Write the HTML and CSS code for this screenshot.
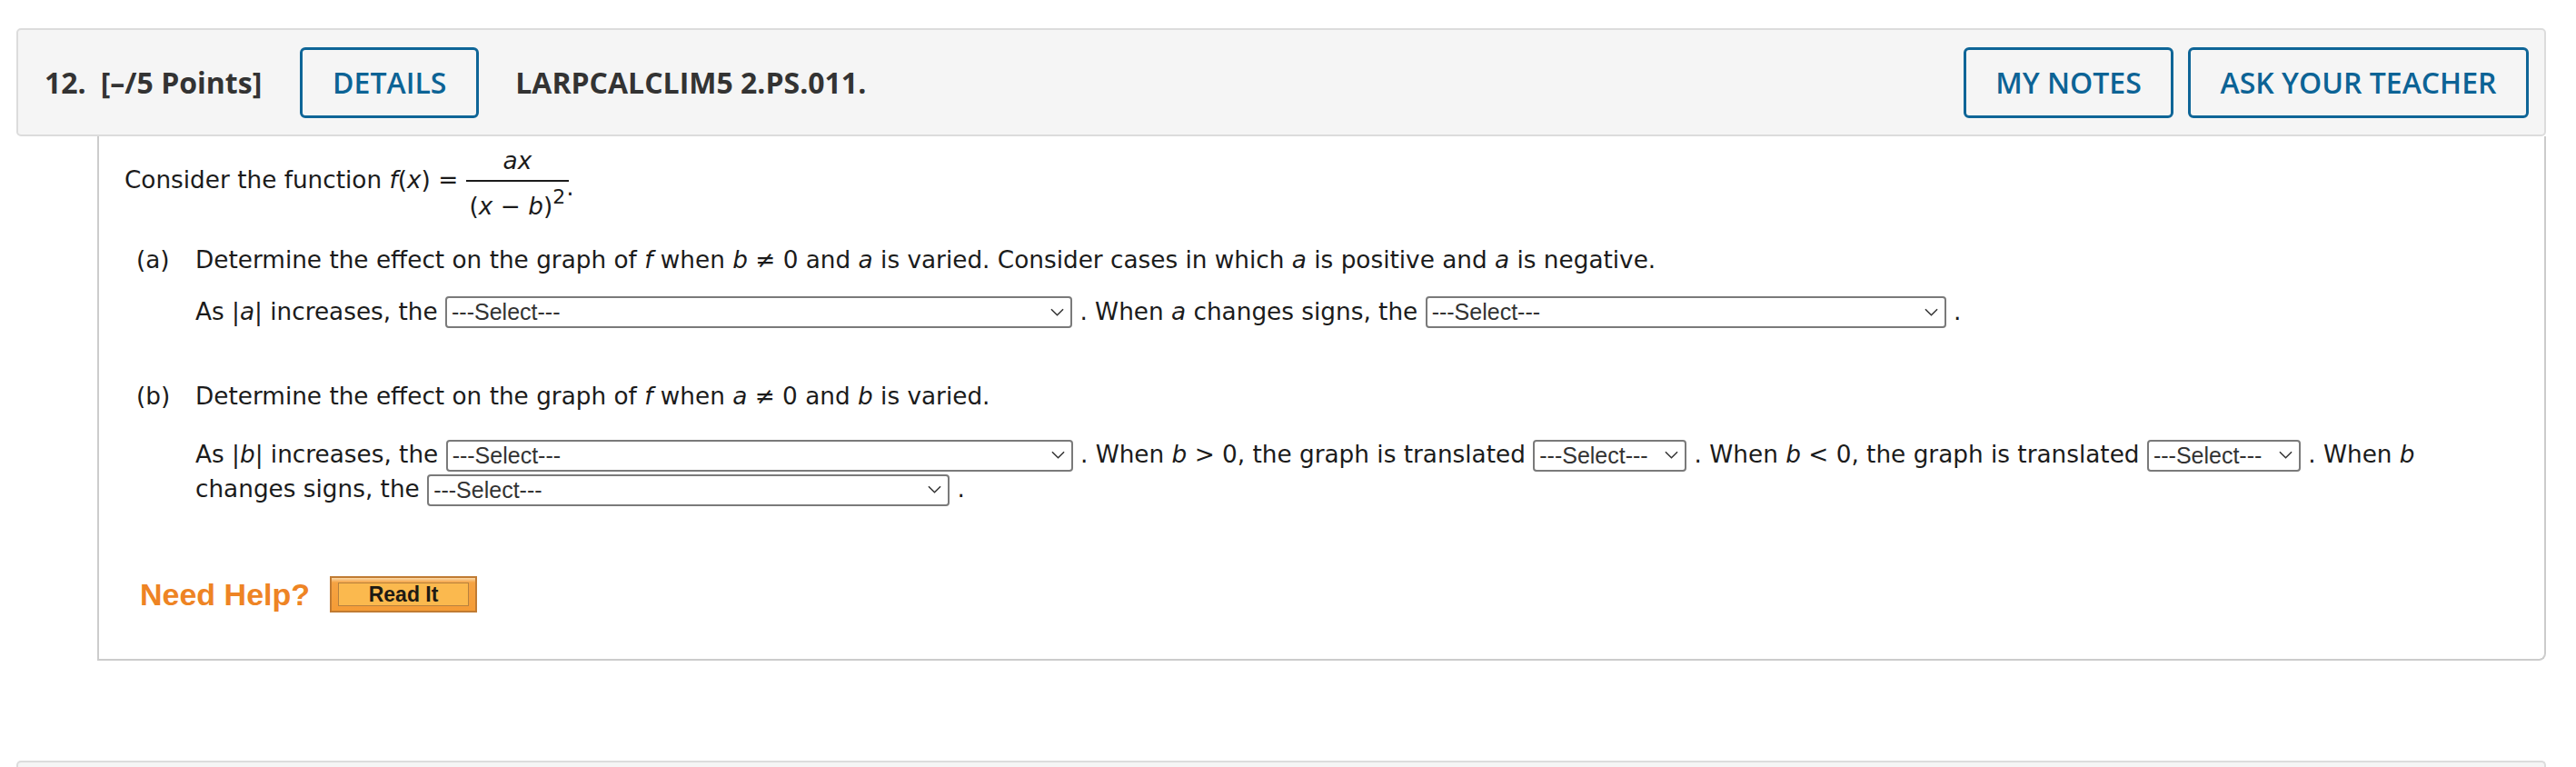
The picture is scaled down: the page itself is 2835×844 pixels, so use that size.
FILE: index.html
```html
<!DOCTYPE html>
<html lang="en">
<head>
<meta charset="utf-8">
<title>LARPCALCLIM5 2.PS.011</title>
<link rel="stylesheet" href="styles.css">
</head>
<body>
<div class="question">
  <div class="q-header">
    <div class="q-num">12.</div>
    <div class="q-points">[–/5 Points]</div>
    <button class="hdr-btn btn-details">DETAILS</button>
    <div class="q-code">LARPCALCLIM5 2.PS.011.</div>
    <div class="hdr-spacer"></div>
    <button class="hdr-btn btn-notes">MY NOTES</button>
    <button class="hdr-btn btn-ask">ASK YOUR TEACHER</button>
  </div>
  <div class="q-body">
    <div class="intro">
      <span class="intro-text">Consider the function <i>f</i>(<i>x</i>) =&nbsp;</span>
      <span class="frac">
        <span class="num"><i>ax</i></span>
        <span class="den">(<i>x</i> − <i>b</i>)<sup>2</sup></span>
      </span>
      <span class="dot">.</span>
    </div>

    <div class="part part-a">
      <div class="part-head"><span class="plabel">(a)</span><span>Determine the effect on the graph of <i>f</i> when <i>b</i> ≠ 0 and <i>a</i> is varied. Consider cases in which <i>a</i> is positive and <i>a</i> is negative.</span></div>
      <p class="answer">As |<i>a</i>| increases, the <span class="sel w-lg"><select><option>---Select---</option></select><svg class="chev" viewBox="0 0 16 9"><path d="M1 1 L8 8 L15 1" fill="none" stroke="#333" stroke-width="1.6"/></svg></span> . When <i>a</i> changes signs, the <span class="sel w-md"><select><option>---Select---</option></select><svg class="chev" viewBox="0 0 16 9"><path d="M1 1 L8 8 L15 1" fill="none" stroke="#333" stroke-width="1.6"/></svg></span> .</p>
    </div>

    <div class="part part-b">
      <div class="part-head"><span class="plabel">(b)</span><span>Determine the effect on the graph of <i>f</i> when <i>a</i> ≠ 0 and <i>b</i> is varied.</span></div>
      <p class="answer answer-wrap">As |<i>b</i>| increases, the <span class="sel w-lg"><select><option>---Select---</option></select><svg class="chev" viewBox="0 0 16 9"><path d="M1 1 L8 8 L15 1" fill="none" stroke="#333" stroke-width="1.6"/></svg></span> . When <i>b</i> &gt; 0, the graph is translated <span class="sel w-sm"><select><option>---Select---</option></select><svg class="chev" viewBox="0 0 16 9"><path d="M1 1 L8 8 L15 1" fill="none" stroke="#333" stroke-width="1.6"/></svg></span> . When <i>b</i> &lt; 0, the graph is translated <span class="sel w-sm"><select><option>---Select---</option></select><svg class="chev" viewBox="0 0 16 9"><path d="M1 1 L8 8 L15 1" fill="none" stroke="#333" stroke-width="1.6"/></svg></span> . When <i>b</i> changes signs, the <span class="sel w-md2"><select><option>---Select---</option></select><svg class="chev" viewBox="0 0 16 9"><path d="M1 1 L8 8 L15 1" fill="none" stroke="#333" stroke-width="1.6"/></svg></span> .</p>
    </div>

    <div class="help">
      <span class="need-help">Need Help?</span>
      <span class="read-it"><span class="read-it-inner">Read It</span></span>
    </div>
  </div>
</div>
<div class="question next">
  <div class="q-header q-header-next"></div>
</div>
</body>
</html>
```

FILE: styles.css
```css
html, body {
  margin: 0;
  padding: 0;
  background: #ffffff;
}
body {
  padding: 31px 33px 0 18px;
  font-family: "DejaVu Sans", Verdana, sans-serif;
  color: #1b1b1b;
}
.q-header {
  display: flex;
  align-items: center;
  height: 115px;
  box-sizing: content-box;
  background: #f5f5f5;
  border: 2px solid #dcdcdc;
  border-radius: 5px;
  padding: 0 17px 0 29px;
  font-family: "Open Sans", sans-serif;
  font-size: 32px;
  color: #333333;
}
.q-num {
  font-weight: 700;
  margin-right: 16px;
}
.q-points {
  font-weight: 700;
  margin-right: 42px;
}
.q-code {
  font-weight: 700;
  margin-left: 40px;
}
.hdr-spacer {
  flex: 1;
}
.hdr-btn {
  font-family: "Open Sans", sans-serif;
  font-size: 32px;
  font-weight: 600;
  color: #0c6395;
  background: #f5f5f5;
  border: 3px solid #0e6597;
  border-radius: 6px;
  height: 78px;
  padding: 0;
  box-sizing: border-box;
  text-align: center;
}
.btn-details { width: 197px; }
.btn-notes { width: 231px; margin-right: 16px; }
.btn-ask { width: 375px; }

.q-body {
  margin-left: 89px;
  border: 2px solid #cccccc;
  border-top: none;
  border-radius: 0 0 8px 0;
  padding: 11px 30px 50px 28px;
  font-size: 26.3px;
  min-height: 514px;
}
.intro {
  display: flex;
  align-items: center;
}
.intro-text {
  margin-top: -9px;
}
.frac {
  display: inline-flex;
  flex-direction: column;
  align-items: center;
}
.frac .num {
  padding: 0 6px 5px;
  line-height: 32px;
}
.frac .den {
  border-top: 2px solid #1b1b1b;
  padding: 11px 4px 0;
  line-height: 32px;
}
.frac sup {
  font-size: 22px;
  line-height: 0;
  vertical-align: 12px;
}
.dot {
  margin-top: 8px;
  margin-left: -3px;
}
.part {
  padding-left: 13px;
}
.part-a { margin-top: 25px; }
.part-b { margin-top: 56px; }
.part-head {
  display: flex;
  line-height: 36px;
}
.plabel {
  width: 65px;
  flex: none;
}
.answer {
  margin: 21px 0 0 65px;
  line-height: 36px;
}
.answer-wrap {
  margin-top: 27px;
  line-height: 38px;
}
.sel {
  position: relative;
  display: inline-block;
  vertical-align: middle;
  height: 35px;
  top: -2px;
}
.sel select {
  -webkit-appearance: none;
  appearance: none;
  width: 100%;
  height: 35px;
  box-sizing: border-box;
  border: 2px solid #7a7a7a;
  border-radius: 4px;
  background: #ffffff;
  font-family: "Liberation Sans", Arial, sans-serif;
  font-size: 25px;
  color: #333333;
  padding: 0 30px 0 5px;
  margin: 0;
}
.sel .chev {
  position: absolute;
  right: 9px;
  top: 14px;
  width: 15px;
  height: 9px;
  pointer-events: none;
}
.w-lg { width: 690px; }
.w-md { width: 573px; }
.w-md2 { width: 575px; }
.w-sm { width: 169px; }

.help {
  display: flex;
  align-items: center;
  margin: 77px 0 0 17px;
}
.need-help {
  font-family: "Liberation Sans", Arial, sans-serif;
  font-weight: 700;
  font-size: 34px;
  color: #ee8424;
  margin-right: 22px;
}
.read-it {
  display: inline-flex;
  box-sizing: border-box;
  width: 162px;
  height: 40px;
  padding: 5px 7px;
  background: linear-gradient(#fbd9a8 0px, #f5a343 5px, #f59c36 100%);
  border: 2px solid #c07b33;
}
.read-it-inner {
  flex: 1;
  display: flex;
  align-items: center;
  justify-content: center;
  background: #fbb94e;
  border: 1px solid #b7813e;
  font-family: "Liberation Sans", Arial, sans-serif;
  font-weight: 700;
  font-size: 23px;
  color: #1d1a14;
}
.next {
  margin-top: 110px;
}
.q-header-next {
  height: 40px;
  border-bottom: none;
  border-radius: 5px 5px 0 0;
}
```
